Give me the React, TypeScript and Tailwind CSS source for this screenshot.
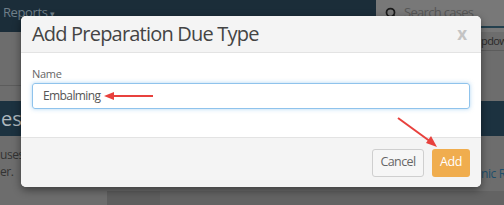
import { Search } from "lucide-react";

export default function App() {
  return (
    <div className="relative w-[504px] h-[205px] overflow-hidden bg-[#6d6d6d] font-['Open_Sans',sans-serif]">
      {/* dimmed page behind the modal */}
      <div className="flex h-[32px]">
        <div className="flex-1 bg-[#1b2d39] px-[3px] pt-[3px] text-[13px] tracking-[-0.4px] text-[#6f7f89]">
          Reports <span className="text-[9px]">▾</span>
        </div>
        <div className="w-[128px] bg-[#787878]">
          <div className="flex items-center gap-[7px] h-[26px] pl-[9px] text-[13px] tracking-[-0.7px] text-[#565656]">
            <Search size={12} strokeWidth={3.5} className="text-[#1a1a1a]" />
            Search cases
          </div>
          <div className="h-[2px] bg-[#24404e]" />
        </div>
      </div>
      <div className="flex h-[69px]">
        <div className="w-[107px] flex flex-col">
          <div className="h-[53px]" />
          <div className="h-px bg-[#5c5c5c]" />
        </div>
        <div className="flex-1 flex flex-col items-end">
          <div className="w-[23px] h-[18px] text-[11px] leading-[18px] tracking-[-0.6px] text-[#2a2a2a]">pdow</div>
          <div className="w-[23px] h-px bg-[#5c5c5c]" />
        </div>
      </div>
      <div className="h-[35px] bg-[#1c3240] pl-[1px] text-[20px] leading-[35px] text-[#aeb8be]">es</div>
      <div className="flex h-[55px]">
        <div className="w-[107px] pt-[10px] text-[12px] leading-[17px] tracking-[-0.4px] text-[#333]">
          <div>uses t</div>
          <div>er.</div>
        </div>
        <div className="flex-1 flex justify-end pt-[29px] text-[12px] tracking-[-0.4px] text-[#1d4e6b]">
          <span className="w-[23px] whitespace-nowrap">nic R</span>
        </div>
      </div>
      <div className="flex h-[14px]">
        <div className="w-[107px] bg-[#6d6d6d]" />
        <div className="w-[53px] bg-[#5e5e5e]" />
        <div className="flex-1 bg-[#636363]" />
      </div>

      {/* modal */}
      <div className="absolute left-[21px] top-[16px] w-[460px] h-[171px] flex flex-col rounded-[5px] overflow-hidden bg-white shadow-[0_3px_9px_rgba(0,0,0,0.45)]">
        <div className="h-[37px] flex items-center justify-between px-[11px] bg-[#f4f4f4] border-b border-[#e3e3e3]">
          <span className="text-[20px] tracking-[-0.8px] text-[#444]">Add Preparation Due Type</span>
          <span className="text-[17px] font-bold text-[#c4c4c4] mr-[3px]">x</span>
        </div>
        <div className="h-[84px] bg-white px-[11px] pt-[13px]">
          <div className="text-[11px] leading-[16px] tracking-[-0.3px] text-[#666] mb-[1px]">Name</div>
          <div className="h-[26px] flex items-center pl-[10px] rounded-[3px] border border-[#8fc3ec] shadow-[0_0_4px_rgba(102,175,233,0.5)] text-[12px] tracking-[-0.6px] text-[#555]">
            Embalming
          </div>
        </div>
        <div className="flex-1 flex items-center justify-end gap-[8px] px-[11px] bg-[#f4f4f4] border-t border-[#e3e3e3]">
          <button className="w-[52px] h-[28px] rounded-[3px] border border-[#cfcfcf] bg-[#f6f6f6] text-[12.5px] tracking-[-0.6px] text-[#666]">
            Cancel
          </button>
          <button className="w-[38px] h-[28px] rounded-[3px] bg-[#f0ad4e] text-[12.5px] tracking-[-0.4px] text-white">Add</button>
        </div>
      </div>

      {/* annotation arrows */}
      <svg className="absolute inset-0 pointer-events-none" width="504" height="205">
        <line x1="153" y1="96" x2="112" y2="96" stroke="#e8413d" strokeWidth="2" />
        <polygon points="104,96 114,92 114,100" fill="#e8413d" />
        <line x1="398" y1="118" x2="431" y2="142" stroke="#e8413d" strokeWidth="2" />
        <polygon points="437,147 426,143 431,136" fill="#e8413d" />
      </svg>
    </div>
  );
}
